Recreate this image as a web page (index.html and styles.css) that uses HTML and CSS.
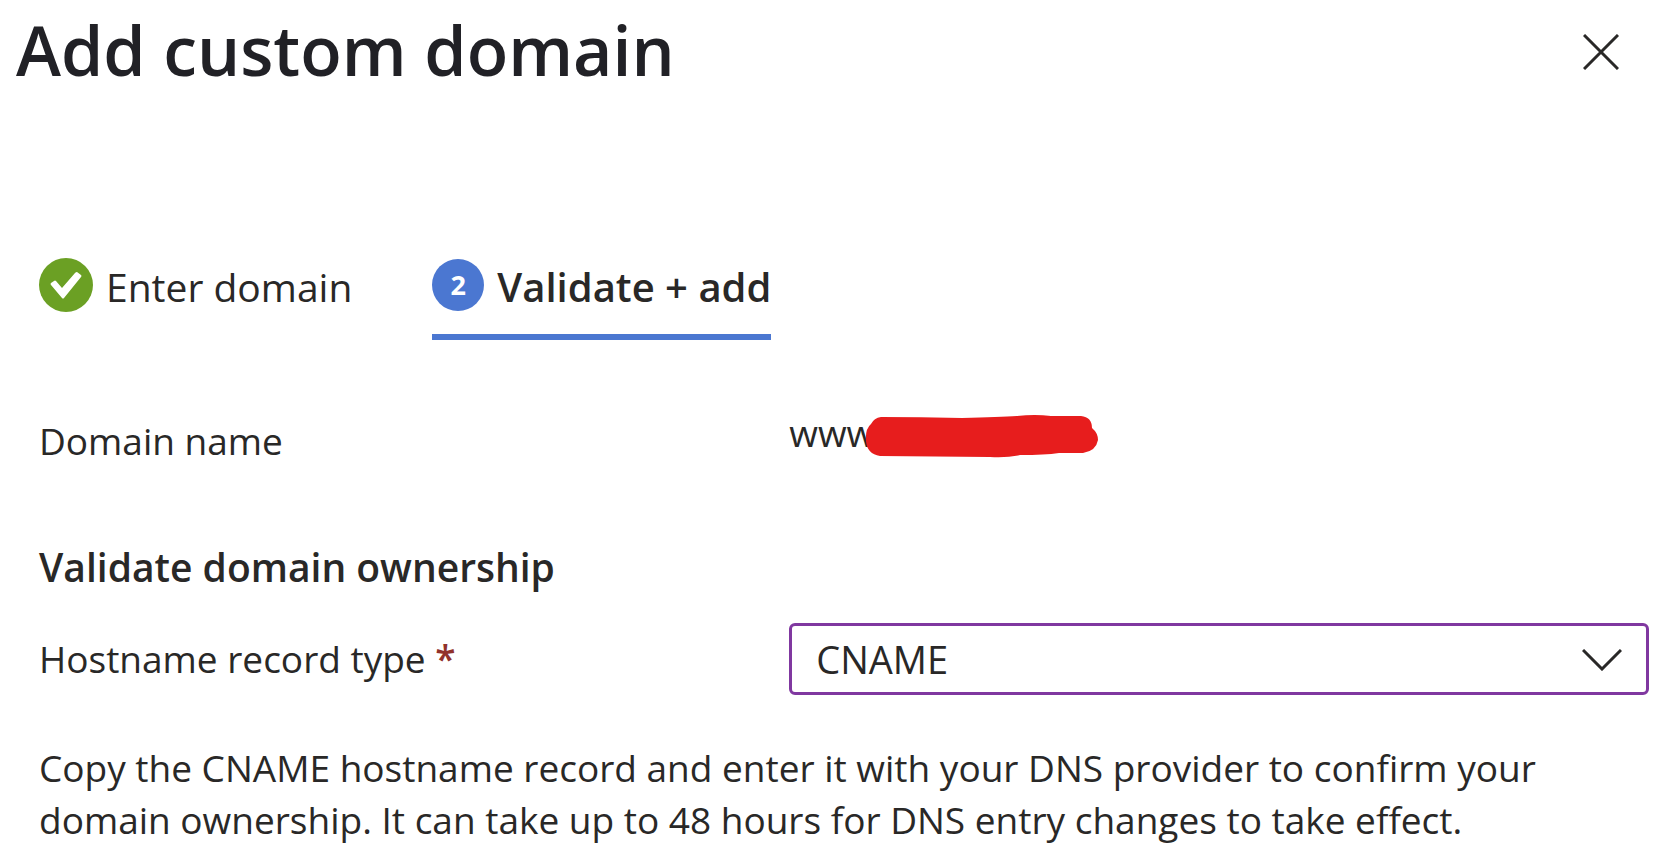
FILE: index.html
```
<!DOCTYPE html>
<html lang="en">
<head>
    <meta charset="UTF-8">
    <meta name="viewport" content="width=device-width, initial-scale=1.0">
    <title>Add custom domain</title>
    <link rel="stylesheet" href="styles.css">
</head>
<body>
    <header class="panel-header">
        <h1>Add custom domain</h1>
        <button type="button" class="close-button" aria-label="Close">
            <svg width="36" height="36" viewBox="0 0 36 36">
                <path d="M1 1 L35 35 M35 1 L1 35" />
            </svg>
        </button>
    </header>

    <main class="panel-content">
        <!-- Wizard steps -->
        <nav class="steps">
            <a href="#" class="step">
                <svg class="step-check" width="54" height="54" viewBox="0 0 54 54">
                    <circle cx="27" cy="27" r="27" fill="#6ba024" />
                    <path d="M12 27 Q11 26 12 25 L15 23 Q16 22 17 23 L23 30 L36 15 Q37 14 38 14 L42 17 Q43 18 42 19 L25 40 Q24 41 23 40 Z" fill="#fff" />
                </svg>
                <span class="step-label">Enter domain</span>
            </a>
            <a href="#" class="step active" aria-current="step">
                <span class="step-number">2</span>
                <span class="step-label">Validate + add</span>
            </a>
        </nav>

        <div class="field-row domain-row">
            <span>Domain name</span>
            <div class="domain-value">
                www
                <svg class="redacted" width="234" height="44" viewBox="0 0 234 44">
                    <path d="M16 2 Q55 2 97 3 Q135 2 152 1 Q170 -1 186 1 L216 1 Q227 2 227 13 Q233 18 233 25 Q231 36 218 38 L194 38 Q180 40 155 40 Q143 43 125 42 L15 41 Q2 39 1 26 Q0 14 6 9 Q9 3 16 2 Z" fill="#e71d1d" />
                </svg>
            </div>
        </div>

        <h2>Validate domain ownership</h2>

        <div class="field-row">
            <label for="record-type">Hostname record type <span class="required">*</span></label>
            <div class="select-wrapper">
                <select id="record-type" required>
                    <option>CNAME</option>
                </select>
                <svg class="chevron" width="40" height="22" viewBox="0 0 40 22">
                    <path d="M1 1 L20 20 L39 1" />
                </svg>
            </div>
        </div>

        <p>Copy the CNAME hostname record and enter it with your DNS provider to confirm your domain ownership. It can take up to 48 hours for DNS entry changes to take effect.</p>
    </main>
</body>
</html>
```

FILE: styles.css
```
* {
    box-sizing: border-box;
}

body {
    margin: 0;
    font-family: "Open Sans", "Noto Sans", sans-serif;
    font-size: 37px;
    line-height: 52px;
    color: #292827;
    background-color: #fff;
}

.panel-header {
    display: flex;
    justify-content: space-between;
    align-items: center;
    padding: 0 49px 4px 16px;
}

h1 {
    margin: 0;
    font-size: 68px;
    line-height: 100px;
    font-weight: 600;
    color: #212126;
}

.close-button {
    display: flex;
    padding: 10px 6px 6px;
    border: none;
    background: none;
    cursor: pointer;
}

.close-button path,
.chevron path {
    fill: none;
    stroke: #292827;
    stroke-width: 3;
}

.panel-content {
    padding: 147px 25px 0 39px;
}

/* Wizard steps */
.steps {
    display: flex;
    gap: 80px;
    font-size: 39px;
}

.step {
    display: flex;
    align-items: center;
    gap: 13px;
    height: 89px;
    padding-bottom: 15px;
    border-bottom: 6px solid transparent;
    color: inherit;
    text-decoration: none;
}

.step.active {
    border-color: #4b77d1;
    font-size: 40px;
    font-weight: 600;
}

.step-label {
    padding-top: 4px;
}

.step-number {
    width: 52px;
    height: 52px;
    border-radius: 50%;
    background-color: #4b77d1;
    color: #fff;
    font-size: 27px;
    font-weight: 700;
    text-align: center;
}

.field-row {
    display: grid;
    grid-template-columns: 46.6% 1fr;
    align-items: center;
}

.domain-row {
    margin-top: 67px;
}

.domain-value {
    position: relative;
    padding-bottom: 16px;
}

/* Marker stroke over the private part of the name */
.redacted {
    position: absolute;
    top: 8px;
    left: 76px;
}

h2 {
    margin: 66px 0 30px;
    font-size: 39px;
    line-height: 52px;
    font-weight: 600;
}

.required {
    color: #91322b;
    font-weight: 600;
}

.select-wrapper {
    position: relative;
}

select {
    display: block;
    width: 100%;
    height: 72px;
    padding: 0 72px 0 24px;
    border: 3px solid #8038a0;
    border-radius: 6px;
    appearance: none;
    background-color: #fff;
    color: inherit;
    font: inherit;
    font-size: 38px;
}

.chevron {
    position: absolute;
    top: 26px;
    right: 27px;
    pointer-events: none;
}

p {
    margin: 47px 0 0;
}
```
